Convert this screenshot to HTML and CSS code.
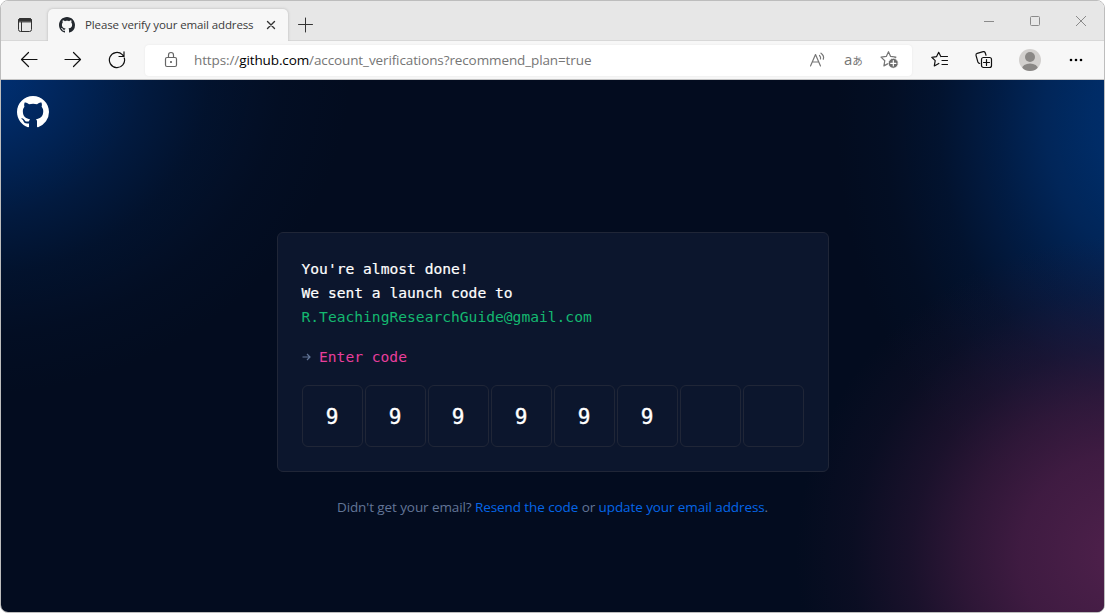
FILE: index.html
```html
<!DOCTYPE html>
<html lang="en">
<head>
<meta charset="utf-8">
<title>Please verify your email address</title>
<link rel="stylesheet" href="styles.css">
</head>
<body>
<svg width="0" height="0" class="defs" aria-hidden="true">
  <symbol id="mark" viewBox="0 0 16 16"><path d="M8 0C3.58 0 0 3.58 0 8c0 3.54 2.29 6.53 5.47 7.59.4.07.55-.17.55-.38 0-.19-.01-.82-.01-1.49-2.01.37-2.53-.49-2.69-.94-.09-.23-.48-.94-.82-1.13-.28-.15-.68-.52-.01-.53.63-.01 1.08.58 1.23.82.72 1.21 1.87.87 2.33.66.07-.52.28-.87.51-1.07-1.78-.2-3.64-.89-3.64-3.95 0-.87.31-1.59.82-2.15-.08-.2-.36-1.02.08-2.12 0 0 .67-.21 2.2.82.64-.18 1.32-.27 2-.27s1.36.09 2 .27c1.53-1.04 2.2-.82 2.2-.82.44 1.1.16 1.92.08 2.12.51.56.82 1.27.82 2.15 0 3.07-1.87 3.75-3.65 3.95.29.25.54.73.54 1.48 0 1.07-.01 1.93-.01 2.2 0 .21.15.46.55.38A8.01 8.01 0 0 0 16 8c0-4.42-3.58-8-8-8z"/></symbol>
</svg>
<div class="window">
  <header class="tabbar">
    <svg class="icon panel" width="16" height="16" viewBox="0 0 16 16"><rect x="1.5" y="1.5" width="13" height="13" rx="2"/><path class="solid" d="M1.5 4.5v-1a2 2 0 0 1 2-2h9a2 2 0 0 1 2 2v1z"/><path d="M4.500 5v9.500"/></svg>
    <div class="tab">
      <svg class="favicon" width="16" height="16"><use href="#mark"/></svg>
      <span class="tab-title">Please verify your email address</span>
      <svg class="icon close-tab" width="10" height="10" viewBox="0 0 10 10"><path d="M1.500 1.500l7 7M8.500 1.500l-7 7"/></svg>
    </div>
    <svg class="icon new-tab" width="16" height="16" viewBox="0 0 16 16"><path d="M8.500 1v14M1.500 7.500h14"/></svg>
    <div class="controls">
      <svg width="12" height="12" viewBox="0 0 12 12"><path d="M1 6.500h10"/></svg>
      <svg width="12" height="12" viewBox="0 0 12 12"><rect x="1.500" y="1.500" width="9" height="9" rx="1"/></svg>
      <svg width="12" height="12" viewBox="0 0 12 12"><path d="M1 1l10 10M11 1L1 11"/></svg>
    </div>
  </header>
  <div class="toolbar">
    <div class="nav">
      <svg class="icon" width="18" height="18" viewBox="0 0 18 18"><path d="M17 8.500H1.500M8.500 1.500l-7 7 7 7"/></svg>
      <svg class="icon" width="18" height="18" viewBox="0 0 18 18"><path d="M1 8.500h15.500M9.500 1.500l7 7-7 7"/></svg>
      <svg class="icon" width="18" height="18" viewBox="0 0 18 18"><path d="M16.300 7A7.600 7.600 0 1 1 14.300 3.600L16 5.500M16 .8v4.700h-5"/></svg>
    </div>
    <div class="address">
      <svg class="icon lock" width="14" height="18" viewBox="0 0 14 18"><rect x="1.500" y="6.500" width="11" height="9" rx="1.500"/><path d="M4.500 6.500V4a2.500 2.500 0 0 1 5 0v2.500"/><circle class="solid" cx="7" cy="11" r=".5"/></svg>
      <span class="url">https://<b>github.com</b>/account_verifications?recommend_plan=true</span>
      <div class="page-tools">
        <svg class="icon" width="18" height="18" viewBox="0 0 18 18"><path d="M1.500 15L6.500 3.500l5 11.500M3.200 11h6.600M10.500 4.500q1.500 1.500 1 3.500M12 2.200q3.500 2.500 2.300 6"/></svg>
        <span class="translate">a<small>あ</small></span>
        <svg class="icon" width="20" height="20" viewBox="0 0 20 20"><path d="M8.500 1.700l2.100 4.700 5.300.7-3.900 3.700.9 5-4.400-2.400-4.600 2.500.9-5.200L1 7.100l5.300-.7z"/><circle class="badge" cx="13.300" cy="13.300" r="5"/><path class="badge-plus" d="M13.300 10.700v5.200M10.700 13.300h5.200"/></svg>
      </div>
    </div>
    <div class="tools">
      <svg class="icon" width="20" height="20" viewBox="0 0 20 20"><path d="M10.800 6.500L8.700 2.300 6.600 6.600 1.800 7.300l3.400 3.300-.9 5.300 4.500-2.500M10.800 6.500h6.700M12 10.500h5.500M12 14.500h5.500"/></svg>
      <svg class="icon" width="20" height="20" viewBox="0 0 20 20"><rect x="7.500" y="7.500" width="10" height="10" rx="2"/><path d="M12.500 9.500v6M9.500 12.500h6M5.800 13.500q-1.500-.3-1.900-1.500L2 5.300q-.3-1.500 1.200-2l6-1.600q1.500-.3 2 1l.8 2.600"/></svg>
      <svg class="avatar" width="22" height="22" viewBox="0 0 22 22"><clipPath id="face"><circle cx="11" cy="11" r="11"/></clipPath><g clip-path="url(#face)"><path fill="#d2d0ce" d="M0 0h22v22H0z"/><circle cx="11" cy="8" r="5"/><ellipse cx="11" cy="20" rx="8" ry="5.500"/></g></svg>
      <svg class="dots" width="16" height="4" viewBox="0 0 16 4"><circle cx="3" cy="2" r="1.300"/><circle cx="8" cy="2" r="1.300"/><circle cx="13" cy="2" r="1.300"/></svg>
    </div>
  </div>
  <main class="page">
    <svg class="logo" width="32" height="32"><use href="#mark"/></svg>
    <section class="card">
      <p class="intro">You're almost done!</p>
      <p class="intro">We sent a launch code to</p>
      <p class="email">R.TeachingResearchGuide@gmail.com</p>
      <p class="prompt"><svg width="10" height="10" viewBox="0 0 10 10"><path d="M.5 5h7.500M5 2l3 3-3 3"/></svg><span>Enter code</span></p>
      <div class="code">
        <span>9</span><span>9</span><span>9</span><span>9</span><span>9</span><span>9</span><span></span><span></span>
      </div>
    </section>
    <p class="help">Didn't get your email? <a>Resend the code</a> or <a>update your email address</a>.</p>
  </main>
</div>
</body>
</html>
```

FILE: styles.css
```css
* { box-sizing: border-box; }
body { margin: 0; background: #fff; font-family: "Open Sans", "Noto Sans", sans-serif; }
p { margin: 0; }
svg { display: block; flex: none; }
.defs { position: absolute; }
.window { width: 1105px; height: 613px; border: 1px solid #bdbdbd; border-radius: 8px; overflow: hidden; display: flex; flex-direction: column; }
.icon { fill: none; stroke: #111; stroke-width: 1.2; stroke-linecap: round; stroke-linejoin: round; }
.icon .solid { fill: currentColor; }

.tabbar { height: 40px; background: #e7e7e7; border-bottom: 1px solid #d8d8d8; display: flex; align-items: flex-start; padding-left: 16px; }
.panel { margin: 16px 15px 0 0; stroke: #333; color: #333; stroke-width: 1; }
.tab { width: 240px; height: 32px; margin-top: 8px; background: #f7f7f7; border-radius: 5px 5px 0 0; box-shadow: 0 0 3px #b5b5b5; clip-path: inset(-4px -4px 0); display: flex; align-items: center; padding: 0 12px 0 11px; }
.favicon { fill: #24292f; }
.tab-title { width: 171px; margin: 0 auto 2px 10px; font-size: 11.5px; letter-spacing: -.12px; white-space: nowrap; color: #3b3b3b; }
.close-tab { stroke: #333; stroke-width: 1.4; }
.new-tab { margin: 16px 0 0 9px; stroke: #333; stroke-width: 1; }
.controls { margin: 14px 17px 0 auto; display: flex; gap: 34px; fill: none; stroke: #8a8a8a; }

.toolbar { height: 39px; background: #f7f7f7; border-bottom: 1px solid #c4c4c4; display: flex; align-items: center; padding-left: 19px; }
.nav { display: flex; gap: 26px; }
.address { width: 767px; height: 31px; margin-left: 19px; background: #fff; border-radius: 4px; box-shadow: 0 0 2px #e4e4e4; display: flex; align-items: center; padding: 0 12px 0 19px; }
.lock { stroke: #666; color: #666; }
.url { margin-left: 16px; font-size: 13.5px; letter-spacing: -.11px; color: #767676; white-space: nowrap; }
.url b { font-weight: 400; color: #000; }
.page-tools { margin-left: auto; display: flex; align-items: center; gap: 17px; }
.page-tools .icon { stroke: #767676; }
.page-tools .badge { fill: #6c6c6c; stroke: #fff; stroke-width: .8; }
.page-tools .badge-plus { stroke: #fff; }
.translate { width: 19px; font-size: 15px; line-height: 18px; color: #767676; white-space: nowrap; transform: translateY(-1px); }
.translate small { font: 10.5px "Noto Sans CJK JP", sans-serif; }
.tools { margin-left: 18px; display: flex; align-items: center; gap: 24px; }
.avatar { margin-left: 1px; fill: #8a8886; }
.dots { margin-left: 3px; }

.page {
  flex: 1; display: flex; flex-direction: column; align-items: center;
  background:
    radial-gradient(ellipse 330px 320px at 1125px 475px, #50204c 0%, #4b1f49f2 15%, #471d46e0 32%, #411b41b0 49%, #38183b70 65%, #3016352b 83%, #30163500 100%),
    radial-gradient(ellipse 320px 420px at 1155px 35px, #002f70 0%, #002e6bee 20%, #002c67cc 35%, #00286093 50%, #00245748 68%, #00204d18 85%, #00204d00 100%),
    radial-gradient(ellipse 380px 325px at -30px -10px, #003278 0%, #003074e0 14%, #002e6eb0 29%, #002a6475 46%, #00255840 63%, #00204d18 82%, #00204d00 100%),
    #030c1f;
}
.logo { align-self: flex-start; margin: 16px 0 0 16px; fill: #fff; }
.card { width: 552px; height: 240px; margin-top: 104px; padding: 24px; border: 1px solid #202637; border-radius: 6px; background: #0c162d; font-family: "DejaVu Sans Mono", monospace; font-size: 14.62px; line-height: 24px; color: #fff; }
.intro { -webkit-text-stroke: .2px #fff; }
.email { color: #14b870; }
.prompt { display: flex; align-items: center; margin-top: 16px; color: #e83e9c; }
.prompt svg { margin-right: 7.500px; fill: none; stroke: #627597; stroke-width: 1.2; }
.code { display: flex; gap: 2px; margin: 16px 0 0; }
.code span { width: 61px; height: 62px; border: 1px solid #202637; border-radius: 6px; text-align: center; line-height: 62px; font-size: 21px; -webkit-text-stroke: .4px #fff; }
.help { margin-top: 25px; font-size: 13.5px; line-height: 21px; letter-spacing: -.09px; color: #627597; white-space: nowrap; }
.help a { color: #0566e8; }
```
